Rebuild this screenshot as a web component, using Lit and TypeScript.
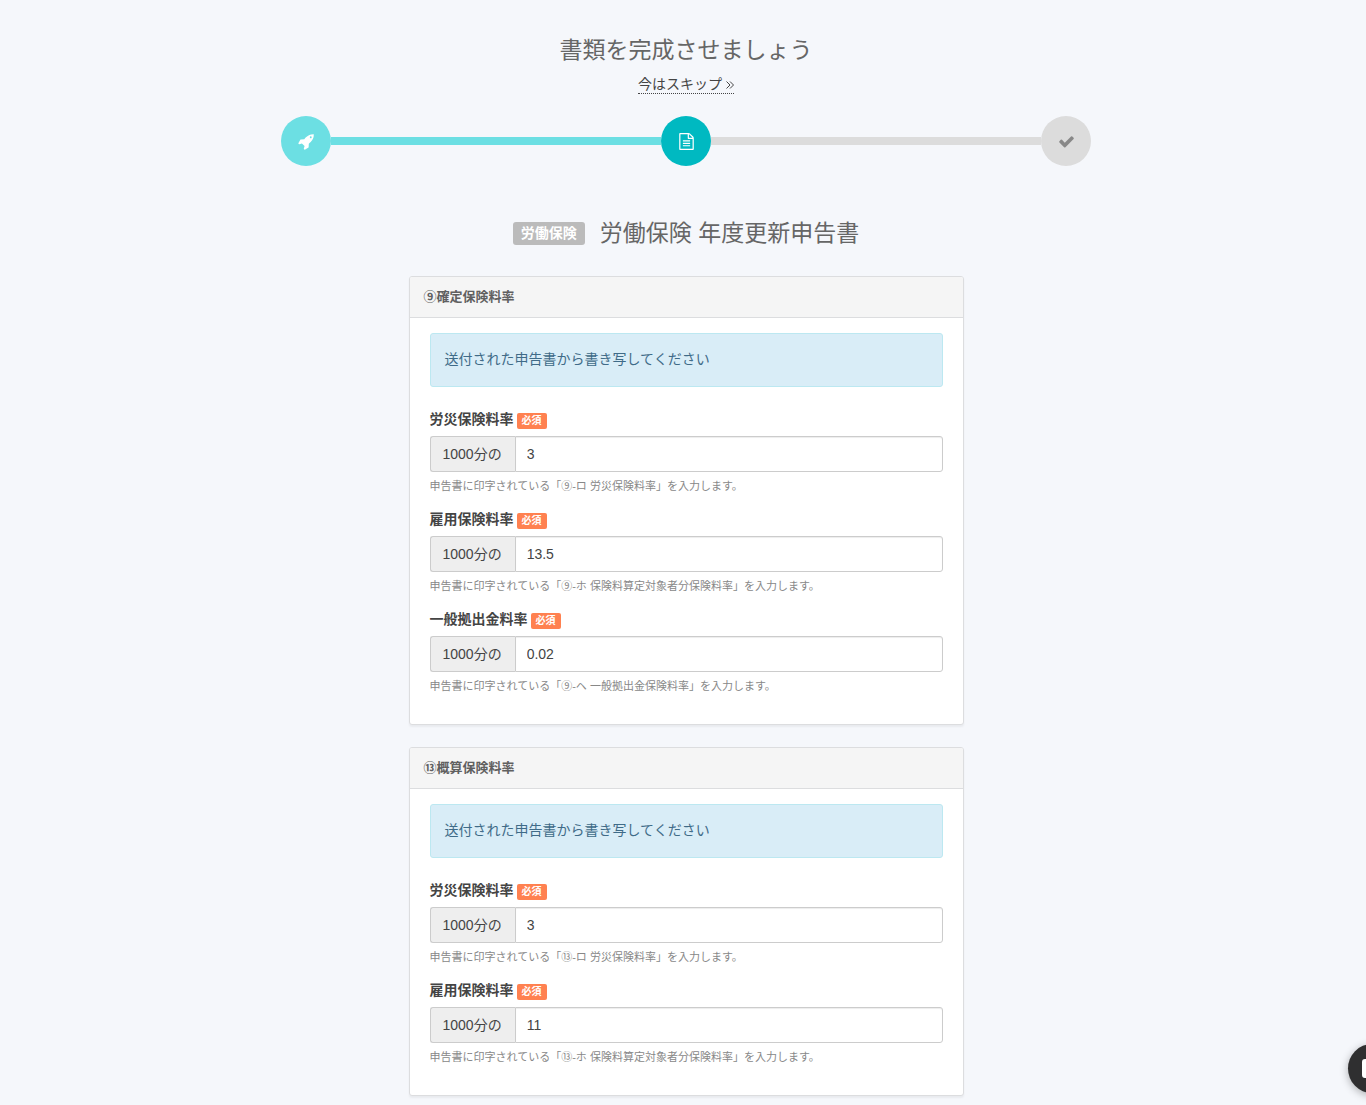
import { LitElement, html, css, svg } from "lit";
import { customElement, property } from "lit/decorators.js";

interface RateField {
  id: string;
  label: string;
  value: string;
  help: string;
}

interface RateSection {
  title: string;
  fields: RateField[];
}

const SECTIONS: RateSection[] = [
  {
    title: "⑨確定保険料率",
    fields: [
      { id: "fixed-accident", label: "労災保険料率", value: "3", help: "申告書に印字されている「⑨-ロ 労災保険料率」を入力します。" },
      { id: "fixed-employment", label: "雇用保険料率", value: "13.5", help: "申告書に印字されている「⑨-ホ 保険料算定対象者分保険料率」を入力します。" },
      { id: "fixed-general", label: "一般拠出金料率", value: "0.02", help: "申告書に印字されている「⑨-ヘ 一般拠出金保険料率」を入力します。" },
    ],
  },
  {
    title: "⑬概算保険料率",
    fields: [
      { id: "estimate-accident", label: "労災保険料率", value: "3", help: "申告書に印字されている「⑬-ロ 労災保険料率」を入力します。" },
      { id: "estimate-employment", label: "雇用保険料率", value: "11", help: "申告書に印字されている「⑬-ホ 保険料算定対象者分保険料率」を入力します。" },
    ],
  },
];

const ROCKET = svg`<path d="M1440 448q0-40-28-68t-68-28-68 28-28 68 28 68 68 28 68-28 28-68zm224-288q0 249-75.5 430.5t-253.5 360.5q-81 80-195 176l-20 379q-2 16-16 26l-384 224q-7 4-16 4-12 0-23-9l-64-64q-13-14-8-32l85-276-281-281-276 85q-3 1-9 1-14 0-23-9l-64-64q-17-19-5-39l224-384q10-14 26-16l379-20q96-114 176-195 188-187 358-258t431-71q14 0 24 9.5t10 22.5z"/>`;
const DOCUMENT = svg`<path d="M1596 380q28 28 48 76t20 88v1152q0 40-28 68t-68 28h-1344q-40 0-68-28t-28-68v-1600q0-40 28-68t68-28h896q40 0 88 20t76 48zm-444-244v376h376q-10-29-22-41l-313-313q-12-12-41-22zm384 1528v-1024h-416q-40 0-68-28t-28-68v-416h-768v1536h1280zm-1024-864q0-14 9-23t23-9h704q14 0 23 9t9 23v64q0 14-9 23t-23 9h-704q-14 0-23-9t-9-23v-64zm736 224q14 0 23 9t9 23v64q0 14-9 23t-23 9h-704q-14 0-23-9t-9-23v-64q0-14 9-23t23-9h704zm0 256q14 0 23 9t9 23v64q0 14-9 23t-23 9h-704q-14 0-23-9t-9-23v-64q0-14 9-23t23-9h704z"/>`;
const CHECK = svg`<path d="M1671 566q0 40-28 68l-724 724-136 136q-28 28-68 28t-68-28l-136-136-362-362q-28-28-28-68t28-68l136-136q28-28 68-28t68 28l294 295 656-657q28-28 68-28t68 28l136 136q28 28 28 68z"/>`;

@customElement("progress-steps")
export class ProgressSteps extends LitElement {
  static styles = css`
    :host { display: block; }
    .steps { display: flex; align-items: center; margin: 0; padding: 0; list-style: none; }
    .step {
      display: flex; align-items: center; justify-content: center;
      flex: none; width: 50px; height: 50px; border-radius: 50%;
    }
    .done { background: #6cdfe3; color: #fff; }
    .current { background: #00b9c1; color: #fff; }
    .todo { background: #dcdcdc; color: #888; }
    .line { flex: 1; height: 8px; background: #dcdcdc; }
    .line.filled { background: #6cdfe3; }
    .icon { display: block; width: 17px; height: 17px; fill: currentColor; }
  `;

  render() {
    const icon = (shape: unknown) =>
      html`<svg class="icon" viewBox="0 0 1792 1792" aria-hidden="true">${shape}</svg>`;
    return html`
      <ol class="steps">
        <li class="step done">${icon(ROCKET)}</li>
        <li class="line filled" role="presentation"></li>
        <li class="step current" aria-current="step">${icon(DOCUMENT)}</li>
        <li class="line" role="presentation"></li>
        <li class="step todo">${icon(CHECK)}</li>
      </ol>
    `;
  }
}

@customElement("rate-panel")
export class RatePanel extends LitElement {
  @property({ attribute: false }) section!: RateSection;

  static styles = css`
    :host { display: block; }
    .panel {
      background: #fff; border: 1px solid #dcdddf; border-radius: 3px;
      box-shadow: 0 2px 2px rgba(0, 0, 0, 0.05);
    }
    .heading {
      margin: 0; padding: 0 14px; border-bottom: 1px solid #dcdddf;
      border-radius: 2px 2px 0 0; background: #f5f5f5; color: #606060;
      font-size: 13px; font-weight: 700; line-height: 40px;
    }
    .body { padding: 15px 20px 14px; }
    .notice {
      margin: 0 0 23px; padding: 15px 14px 17px; border: 1px solid #bce8f1;
      border-radius: 3px; background: #d9edf7; color: #3f6b88; line-height: 20px;
    }
    .field { margin-bottom: 14px; }
    .caption { display: flex; align-items: flex-start; gap: 3px; height: 20px; margin-bottom: 6px; }
    .label { font-weight: 700; line-height: 18px; }
    .required {
      margin-top: 3px; padding: 0 5px; border-radius: 2px; background: #ff8150;
      color: #fff; font-size: 10px; font-weight: 700; line-height: 16px;
    }
    .group { display: flex; height: 36px; }
    .addon {
      box-sizing: border-box; padding: 0 13px 0 12px; border: 1px solid #ccc;
      border-right: 0; border-radius: 3px 0 0 3px; background: #eee; line-height: 34px;
    }
    .input {
      box-sizing: border-box; flex: 1; min-width: 0; margin: 0; padding: 0 11px;
      border: 1px solid #ccc; border-radius: 0 3px 3px 0; background: #fff;
      box-shadow: inset 0 1px 1px rgba(0, 0, 0, 0.075);
      color: #444; font: inherit;
    }
    .help { margin: 4px 0 0; color: #888; font-size: 11px; line-height: 20px; }
  `;

  render() {
    return html`
      <section class="panel">
        <h3 class="heading">${this.section.title}</h3>
        <div class="body">
          <p class="notice">送付された申告書から書き写してください</p>
          ${this.section.fields.map(
            (f) => html`
              <div class="field">
                <div class="caption">
                  <label class="label" for=${f.id}>${f.label}</label>
                  <span class="required">必須</span>
                </div>
                <div class="group">
                  <span class="addon">1000分の</span>
                  <input class="input" id=${f.id} type="text" inputmode="decimal"
                    aria-describedby="${f.id}-help" .value=${f.value} />
                </div>
                <p class="help" id="${f.id}-help">${f.help}</p>
              </div>
            `
          )}
        </div>
      </section>
    `;
  }
}

@customElement("app-root")
export class AppRoot extends LitElement {
  static styles = css`
    :host {
      display: block; box-sizing: border-box; min-height: 100vh;
      padding: 36px 0 9px 6px; background: #f5f7fb; color: #444;
      font: 14px/20px "Liberation Sans", "Noto Sans CJK JP", sans-serif;
    }
    .intro { display: flex; flex-direction: column; align-items: center; }
    .title { margin: 0; color: #666; font-size: 23px; font-weight: 400; line-height: 28px; }
    .skip {
      display: flex; align-items: center; gap: 4px; margin-top: 11px;
      border-bottom: 1px dotted #444; color: #444; text-decoration: none; line-height: 18px;
    }
    .chevrons {
      width: 8px; height: 8px; margin-top: 2px; fill: none; stroke: currentColor; stroke-width: 1;
    }
    .progress { max-width: 810px; margin: 22px auto 0; }
    .document { display: flex; align-items: center; justify-content: center; gap: 15px; margin-top: 53px; }
    .tag {
      padding: 0 8px; border-radius: 3px; background: #bbb; color: #fff;
      font-weight: 700; line-height: 23px;
    }
    .forms { display: flex; flex-direction: column; gap: 22px; max-width: 555px; margin: 29px auto 0; }
    .chat {
      position: fixed; right: -30px; bottom: 12px; display: flex; align-items: center;
      width: 48px; height: 49px; padding: 0 14px; border: 0; border-radius: 50%;
      background: #2f2f30; box-shadow: 0 2px 8px rgba(0, 0, 0, 0.3);
    }
    .bubble { width: 20px; height: 22px; fill: #fff; }
  `;

  render() {
    return html`
      <main>
        <header class="intro">
          <h1 class="title">書類を完成させましょう</h1>
          <a class="skip" href="#">今はスキップ
            <svg class="chevrons" viewBox="0 0 8 8" aria-hidden="true">
              <path d="M0.5 0.5L4 4L0.5 7.5M4 0.5L7.5 4L4 7.5" />
            </svg>
          </a>
        </header>
        <progress-steps class="progress"></progress-steps>
        <div class="document">
          <span class="tag">労働保険</span>
          <h2 class="title">労働保険 年度更新申告書</h2>
        </div>
        <form class="forms">
          ${SECTIONS.map((s) => html`<rate-panel .section=${s}></rate-panel>`)}
        </form>
      </main>
      <button class="chat" type="button" aria-label="チャット">
        <svg class="bubble" viewBox="0 0 20 22" aria-hidden="true">
          <path d="M3 1H17Q20 1 20 4V22L15 20H3Q0 20 0 17V4Q0 1 3 1Z" />
        </svg>
      </button>
    `;
  }
}
